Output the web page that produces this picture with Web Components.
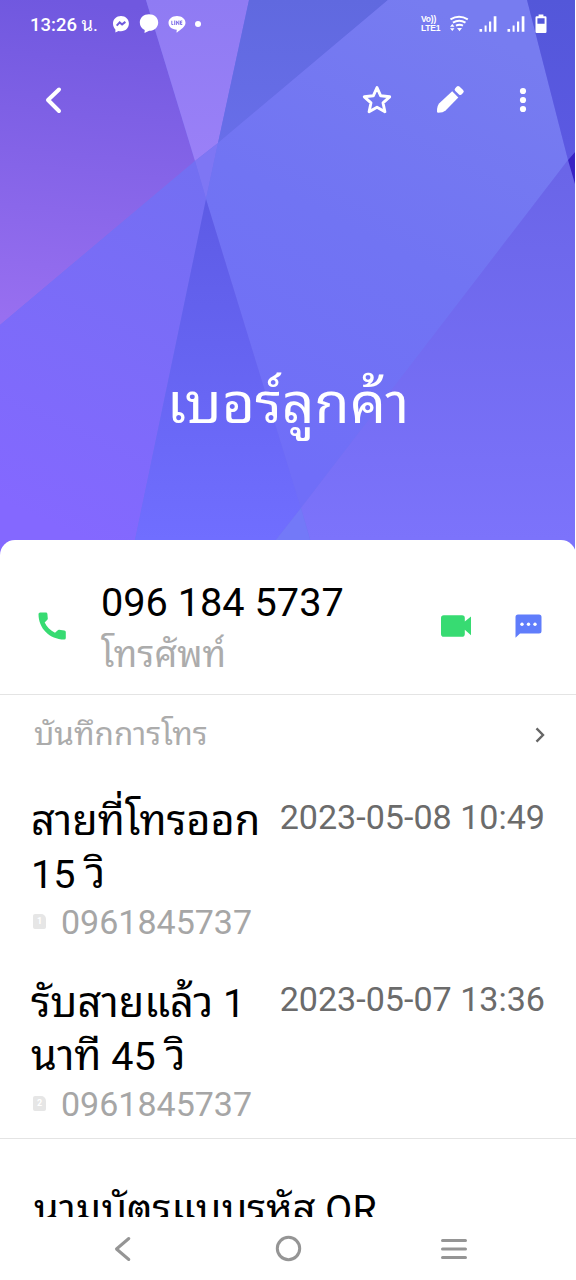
<!DOCTYPE html>
<html lang="th">
<head>
<meta charset="utf-8">
<title>เบอร์ลูกค้า</title>
<style>
html,body{margin:0;height:100%;background:#fff;font-family:Roboto,"Noto Sans Thai Looped",sans-serif}
</style>
</head>
<body>
<contact-page></contact-page>
<script>
const define=(name,html)=>customElements.define(name,class extends HTMLElement{
  constructor(){super();this.attachShadow({mode:'open'}).innerHTML=html}
});

const ICONS={
 back:['0 0 20 28','<path d="M15 3.500 4 14l11 11" fill="none" stroke="currentColor" stroke-width="4" stroke-linecap="round" stroke-linejoin="round"/>'],
 star:['0 0 32 32','<path d="m16 3.600 3.700 8.200 9 1-6.700 6 1.900 8.900L16 23.200l-7.900 4.500L10 18.800l-6.700-6 9-1z" fill="none" stroke="currentColor" stroke-width="2.900" stroke-linejoin="round"/>'],
 pencil:['0 0 32 32','<g fill="currentColor"><path d="M18.200 7.300 5.300 19.300Q3 21.600 3 27.500q0 1.200 1.200 1.200 5 0 7.400-2.200L24.300 13.600z"/><rect x="-3" y="-4.500" width="6" height="9" rx="2" transform="translate(25.200 6.500) rotate(-47)"/></g>'],
 more:['0 0 8 28','<g fill="currentColor"><circle cx="4" cy="5" r="3.100"/><circle cx="4" cy="14" r="3.100"/><circle cx="4" cy="23" r="3.100"/></g>'],
 messenger:['0 0 18 18','<path fill="currentColor" d="M9 1c4.600 0 7.900 3.200 7.900 7.500S13.600 16.200 9 16.200c-.9 0-1.700-.1-2.500-.3L3.400 17.400v-3C1.900 12.900 1 10.800 1 8.500 1 4.200 4.400 1 9 1z"/><path d="m4.700 10.600 3-3.200 2.400 2 3.300-2.500" fill="none" stroke="#6f5bdc" stroke-width="2"/>'],
 bubble:['0 0 20 20','<path fill="currentColor" d="M10 .3c5.300 0 9.200 3.500 9.200 8.200s-3.800 8.300-9 8.300L5.500 18.900l.2-3C2.700 14.500.8 11.900.8 8.500.8 3.800 4.700.3 10 .3z"/>'],
 line:['0 0 18 18','<path fill="currentColor" d="M9 1c4.700 0 8.500 2.900 8.500 6.800S12.900 14.500 9 17.500c-.4.200-.6 0-.5-.4l.3-2.300C4 14.600.5 11.700.5 7.800.5 3.900 4.300 1 9 1z"/><path d="M3.800 5.800v3.700h1.500M6.700 5.500v4.500M8.400 10V5.900l2.500 3.700V5.500M14.300 6h-1.800v3.500h1.800M12.500 7.800h1.700" fill="none" stroke="#8071e8" stroke-width="1"/>'],
 wifi:['0 0 20 18','<g fill="none" stroke="currentColor" stroke-width="2"><path d="M1.500 4.300Q10-.8 18.800 4.300"/><path d="M3.900 7.700q6.300-3.700 12.600 0"/><path d="M7 10.700q3.500-1.700 7 0"/></g><path fill="currentColor" d="M8 13h5l-2.500 3.300zM1 11.800l2.300-2.800 2.200 2.800zM1 13.300h4.500l-2.200 2.800z"/>'],
 signal:['0 0 18 18','<path fill="currentColor" d="M.5 14h2.600v2.800H.500zM5.600 10.500h2v6.300h-2zM10 6.500h2.200v10.300H10zM14.700 1.200h2.700v15.600h-2.700z"/>'],
 battery:['0 0 12 20','<path fill="currentColor" fill-rule="evenodd" d="M3.600.5h4.800v1.700h1.900q1.200 0 1.200 1.200v14.400q0 1.200-1.200 1.200H1.700Q.5 19 .5 17.800V3.400q0-1.200 1.200-1.200h1.900zM2.400 4.300v5.500h7.200V4.300z"/>'],
 phone:['0 0 28 28','<path fill="currentColor" d="M2.200.5h5.700q1.400 0 1.500 1.400l.4 4.500q0 .8-.5 1.400L6.700 10.600c2.200 4.400 5.700 8 10.300 10.200l2.800-2.600q.5-.5 1.300-.4l5.200.6q1.500.2 1.500 1.600v6q0 1.600-1.600 1.600C11.500 27.300.5 16.500.5 2Q.5.500 2.200.500z"/>'],
 video:['0 0 30 22','<path fill="currentColor" d="M2.800.3h18.200q2.800 0 2.800 2.800v3.500L30 1.500v18.700l-6.200-5.500v4.200q0 2.800-2.800 2.800H2.800Q0 21.700 0 18.900V3.100Q0 .3 2.800.300z"/>'],
 sms:['0 0 27 24','<path fill="currentColor" d="M3 .5h21q2.500 0 2.500 2.500v14q0 2.500-2.500 2.500H5L.5 23.700V3Q.5.500 3 .500z"/><g fill="#fff"><circle cx="7" cy="10.200" r="1.700"/><circle cx="13.500" cy="10.200" r="1.700"/><circle cx="20" cy="10.200" r="1.700"/></g>'],
 chevron:['0 0 10 16','<path d="m1.500 1.300 6.500 6.700-6.500 6.700" fill="none" stroke="currentColor" stroke-width="2.400"/>'],
 navback:['0 0 18 26','<path d="M14.800 2.500 2.500 13l12.300 10.500" fill="none" stroke="currentColor" stroke-width="3" stroke-linecap="round" stroke-linejoin="round"/>'],
 home:['0 0 28 28','<circle cx="14.500" cy="13.500" r="11.200" fill="none" stroke="currentColor" stroke-width="3"/>'],
 menu:['0 0 28 24','<path d="M3.500 3.500h23M3.500 12h23M3.500 20.500h23" stroke="currentColor" stroke-width="3" stroke-linecap="round"/>']
};
customElements.define('ui-icon',class extends HTMLElement{
  constructor(){super();this.attachShadow({mode:'open'})}
  connectedCallback(){
    const [box,art]=ICONS[this.getAttribute('name')],[,,w,h]=box.split(' ');
    this.shadowRoot.innerHTML=`<style>:host{display:block;flex:none;width:${w}px;height:${h}px}svg{display:block}</style><svg width="${w}" height="${h}" viewBox="${box}">${art}</svg>`;
  }
});

define('facet-art',`<style>:host{display:block}svg{display:block}</style>
<svg width="575" height="560" viewBox="0 0 575 560" shape-rendering="geometricPrecision">
<defs>
<linearGradient id="a" gradientUnits="userSpaceOnUse" x1="60" y1="0" x2="30" y2="320"><stop stop-color="#7058df"/><stop offset="1" stop-color="#986ff0"/></linearGradient>
<linearGradient id="b" x2="0" y2="1"><stop stop-color="#8f7bf3"/><stop offset="1" stop-color="#9a80f7"/></linearGradient>
<linearGradient id="c" x2="0" y2="1"><stop stop-color="#6069df"/><stop offset="1" stop-color="#686ee9"/></linearGradient>
<linearGradient id="e" gradientUnits="userSpaceOnUse" x1="200" y1="170" x2="40" y2="520"><stop stop-color="#736ff2"/><stop offset="1" stop-color="#8468ff"/></linearGradient>
<linearGradient id="f" gradientUnits="userSpaceOnUse" x1="0" y1="199" x2="0" y2="540"><stop stop-color="#5d5be5"/><stop offset="1" stop-color="#706eff"/></linearGradient>
<linearGradient id="g" gradientUnits="userSpaceOnUse" x1="500" y1="40" x2="280" y2="460"><stop stop-color="#777cf0"/><stop offset=".5" stop-color="#7174f3"/><stop offset="1" stop-color="#706ef8"/></linearGradient>
<linearGradient id="h" x2="0" y2="1"><stop stop-color="#5357d9"/><stop offset="1" stop-color="#5c59e3"/></linearGradient>
<linearGradient id="j" gradientUnits="userSpaceOnUse" x1="0" y1="170" x2="0" y2="540"><stop stop-color="#6a65e8"/><stop offset="1" stop-color="#7c73fb"/></linearGradient>
</defs>
<path fill="#716fee" d="M0 0h575v560H0z"/>
<path fill="url(#a)" d="M0 0h146l49 161L0 325z"/>
<path fill="url(#b)" d="M146 0h103l-31 143-23 18z"/>
<path fill="url(#c)" d="M249 0h139L218 143z"/>
<path fill="#7e76f4" d="m218 143-23 18 11 38z"/>
<path fill="url(#e)" d="m195 161 11 38-71 341-4 20H0V325z"/>
<path fill="url(#g)" d="M388 0h139l41 160-267 348-95-309 12-56z"/>
<path fill="url(#f)" d="m206 199 95 309-41 52H131l4-20z"/>
<path fill="url(#h)" d="M527 0h48v152l-7 8z"/>
<path fill="url(#j)" d="m568 160 7 22v378H316L301 508z"/>
<path fill="#3822c4" d="m575 152-7 8 7 24z"/>
<path fill="#7379f8" d="m301 508 15 52h-56z"/>
</svg>`);

define('status-bar',`<style>
:host{display:flex;height:48px;box-sizing:border-box;padding:0 29px 0 30px;align-items:center;color:#fff}
.time{font-size:18.500px;font-weight:500;line-height:24px;width:82px;white-space:nowrap;padding-top:2px}
.th{font-size:18.500px;font-weight:400}
.l,.r{display:flex;align-items:center}
.l{gap:9px}.dot{width:6px;height:6px;border-radius:50%;background:#fff}
.r{margin-left:auto;gap:10px}
.lte{width:20px;margin-right:-2px;white-space:nowrap;font-family:"Liberation Sans",sans-serif;font-weight:700}
.lte div{font-size:8.500px;line-height:9px;letter-spacing:-.2px}
</style>
<div class="time">13:26 <span class="th">น.</span></div>
<div class="l"><ui-icon name="messenger"></ui-icon><ui-icon name="bubble"></ui-icon><ui-icon name="line"></ui-icon><span class="dot"></span></div>
<div class="r"><div class="lte"><div>Vo))</div><div>LTE1</div></div><ui-icon name="wifi"></ui-icon><ui-icon name="signal"></ui-icon><ui-icon name="signal"></ui-icon><ui-icon name="battery"></ui-icon></div>`);

define('contact-header',`<style>
:host{display:grid;height:540px;color:#fff}
facet-art,.content{grid-area:1/1;min-width:0;min-height:0}
.content{z-index:1;display:flex;flex-direction:column}
nav{display:flex;height:54px;margin-top:25px;align-items:center;padding:0 49px 0 44px}
.acts{display:flex;align-items:center;margin-left:auto;gap:41px}
.acts [name=more]{margin-left:12px}
h1{margin:auto 0 91px;font-weight:400;font-size:57px;line-height:90px;text-align:center;white-space:nowrap}
</style>
<facet-art></facet-art>
<div class="content"><status-bar></status-bar>
<nav><ui-icon name="back"></ui-icon><div class="acts"><ui-icon name="star"></ui-icon><ui-icon name="pencil"></ui-icon><ui-icon name="more"></ui-icon></div></nav>
<h1><slot></slot></h1></div>`);

define('phone-row',`<style>
:host{display:flex;height:155px;box-sizing:border-box;align-items:center;padding:18px 34px 0 38px;border-bottom:1px solid #e4e4e4}
.call{color:#37db72}.video{color:#37db72}.sms{color:#607dfb}
.txt{margin-left:35px;flex:1;white-space:nowrap;padding-top:5px}
.num{font-size:39.700px;line-height:52px;color:#000}
.kind{font-size:36px;line-height:52px;color:#acacac}
.video{margin-right:44px}
</style>
<ui-icon class="call" name="phone"></ui-icon>
<div class="txt"><div class="num"><slot name="number"></slot></div><div class="kind"><slot name="kind"></slot></div></div>
<ui-icon class="video" name="video"></ui-icon><ui-icon class="sms" name="sms"></ui-icon>`);

define('section-title',`<style>
:host{display:flex;height:79px;align-items:center;justify-content:space-between;padding:0 31px 0 34px;font-size:31.500px;color:#acacac}
span{line-height:48px}
ui-icon{color:#666}
</style><span><slot></slot></span><ui-icon name="chevron"></ui-icon>`);

define('call-entry',`<style>
:host{display:block;height:182px;padding:0 31px 0 31px}
.top{display:flex;justify-content:space-between;height:106px}
.what{font-size:41.500px;color:#000;white-space:nowrap}
.what div{height:53px;line-height:53px}
.when{font-size:34.100px;line-height:46px;color:#6b6b6b;white-space:nowrap}
.sub{display:flex;align-items:center;height:44px;color:#a6a6a6;font-size:34px;line-height:44px}
.sim{width:13px;height:15px;margin:-2px 15px 0 2px;background:#e6e6e6;border-radius:2px 5px 2px 2px;color:#fff;font:700 9px/15px Roboto,sans-serif;text-align:center}
</style>
<div class="top"><div class="what"><div><slot name="a"></slot></div><div><slot name="b"></slot></div></div><div class="when"><slot name="when"></slot></div></div>
<div class="sub"><span class="sim"><slot name="sim"></slot></span><slot name="number"></slot></div>`);

define('qr-row',`<style>
:host{display:block;height:79px;box-sizing:border-box;border-top:1px solid #e4e4e4;overflow:hidden;padding:44px 34px 0;font-size:40px;line-height:54px;color:#000;white-space:nowrap}
</style><slot></slot>`);

define('nav-bar',`<style>
:host{display:grid;grid-template-columns:repeat(3,1fr);height:63px;color:#959595;padding:0 40px;justify-items:center;align-items:center;box-sizing:border-box}
</style><ui-icon name="navback"></ui-icon><ui-icon name="home"></ui-icon><ui-icon name="menu"></ui-icon>`);

define('contact-page',`<style>
:host{display:flex;flex-direction:column;width:576px;height:1280px;overflow:hidden;background:#fff}
contact-header{flex:none}
main{flex:none;height:677px;background:#fff;border-radius:15px 15px 0 0;position:relative;z-index:2;overflow:hidden}
.log{height:364px;padding-top:20px;box-sizing:border-box}
.d{font-size:39.500px}
</style>
<contact-header>เบอร์ลูกค้า</contact-header>
<main>
<phone-row><span slot="number">096 184 5737</span><span slot="kind">โทรศัพท์</span></phone-row>
<section-title>บันทึกการโทร</section-title>
<div class="log">
<call-entry><span slot="a">สายที่โทรออก</span><span slot="b"><span class="d">15 </span>วิ</span><span slot="when">2023-05-08 10:49</span><span slot="sim">1</span><span slot="number">0961845737</span></call-entry>
<call-entry><span slot="a">รับสายแล้ว<span class="d"> 1</span></span><span slot="b">นาที<span class="d"> 45 </span>วิ</span><span slot="when">2023-05-07 13:36</span><span slot="sim">2</span><span slot="number">0961845737</span></call-entry>
</div>
<qr-row>นามบัตรแบบรหัส<span class="d"> QR</span></qr-row>
</main>
<nav-bar></nav-bar>`);
</script>
</body>
</html>
